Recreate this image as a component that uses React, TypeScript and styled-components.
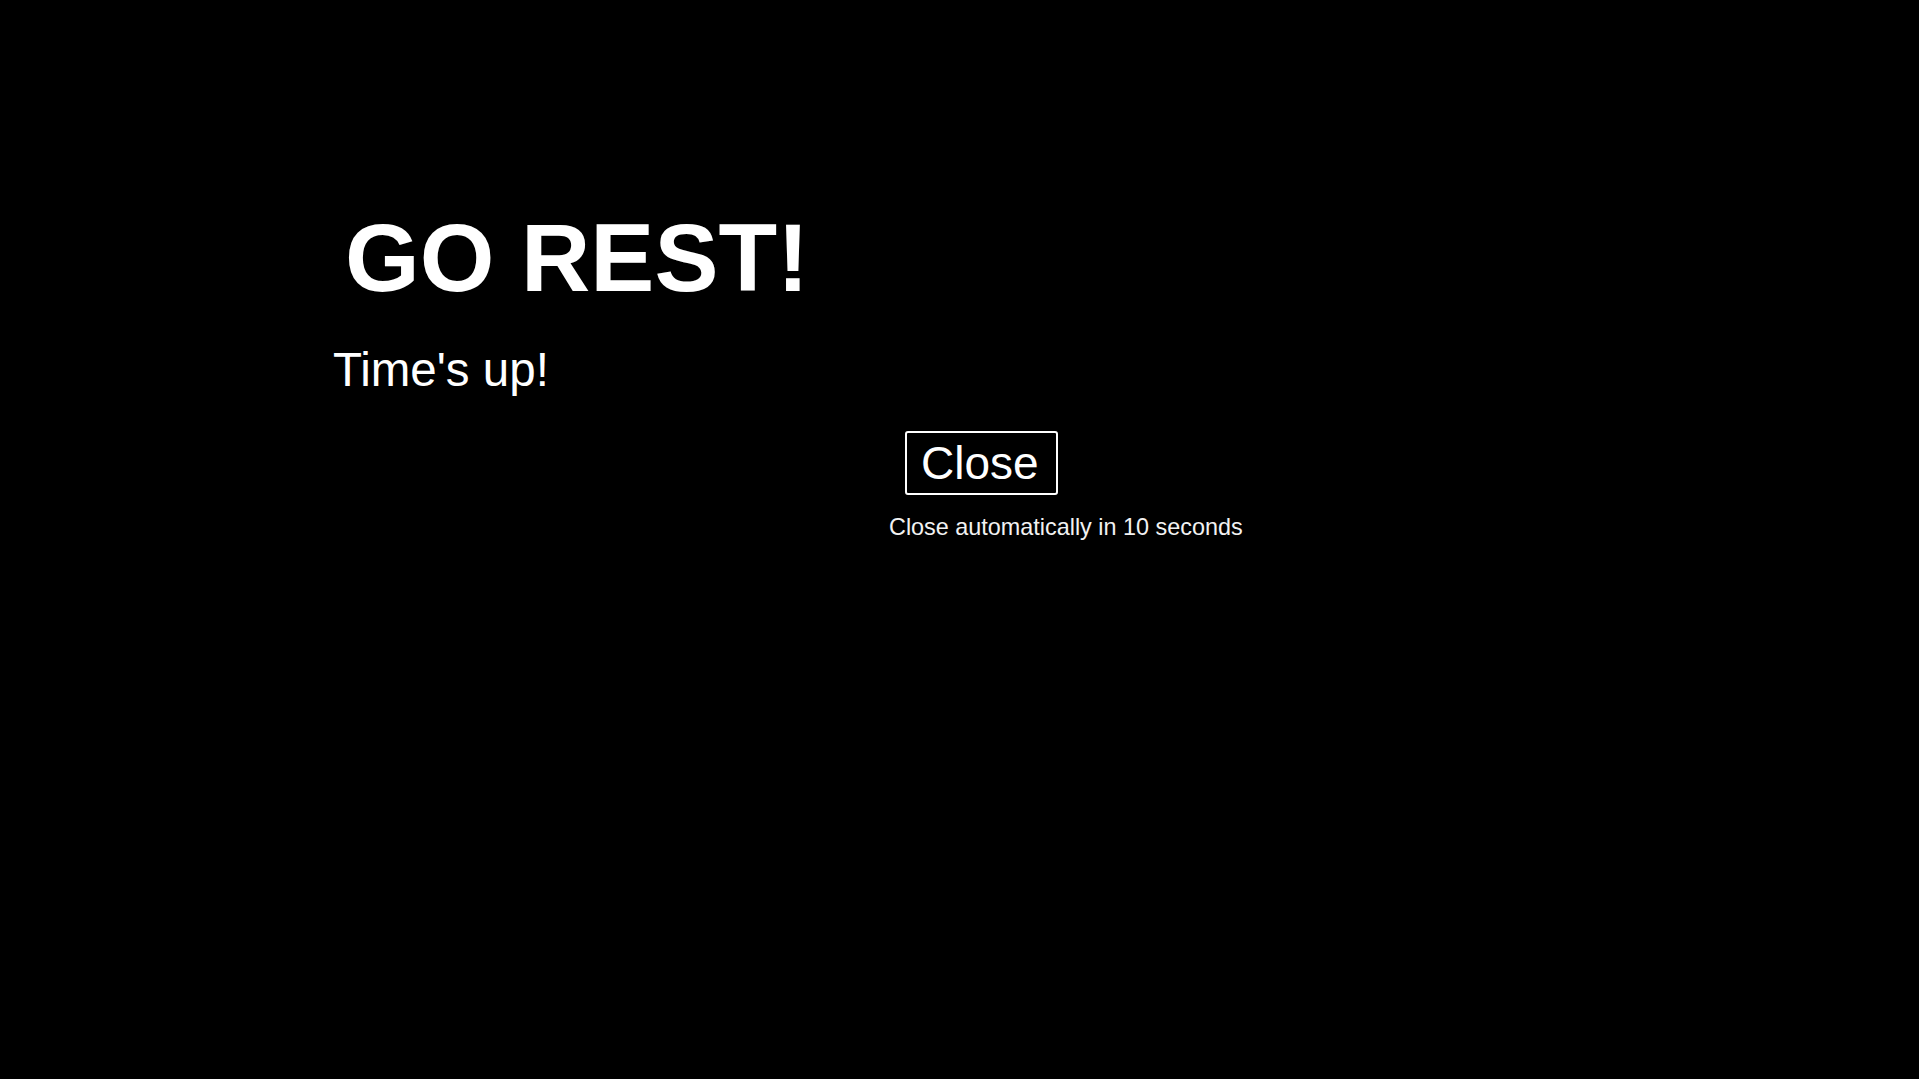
import React from 'react'
import styled, { createGlobalStyle } from 'styled-components'

const GlobalStyles = createGlobalStyle`
  html,
  body {
    margin: 0;
    padding: 0;
    background: #000;
  }
  body {
    font-family: 'Liberation Sans', Arial, sans-serif;
    color: #fff;
    min-height: 100vh;
  }
`

const Page = styled.main`
  display: flex;
  flex-direction: column;
  align-items: flex-start;
  box-sizing: border-box;
  min-height: 100vh;
  padding-top: 210px;
  background: #000;
`

const Title = styled.h1`
  margin: 0 0 0 345px;
  font-size: 96px;
  font-weight: 700;
  line-height: 1;
  color: #fff;
`

const Subtitle = styled.p`
  margin: 40px 0 0 333px;
  font-size: 47.5px;
  line-height: 1;
  color: #fff;
`

const Actions = styled.div`
  display: flex;
  flex-direction: column;
  align-items: flex-start;
  margin: 37px 0 0 889px;
`

const CloseButton = styled.button`
  margin-left: 16px;
  padding: 7px 17px 7px 14px;
  border: 2px solid #fff;
  border-radius: 3px;
  background: #000;
  color: #fff;
  font-family: inherit;
  font-size: 46px;
  line-height: 1;
  cursor: pointer;
`

const Countdown = styled.p`
  margin: 21px 0 0;
  font-size: 23.4px;
  line-height: 1;
  color: #f2f2f2;
`

const App: React.FC = () => {
  const seconds = 10

  return (
    <Page>
      <GlobalStyles />
      <Title>GO REST!</Title>
      <Subtitle>Time's up!</Subtitle>
      <Actions>
        <CloseButton type="button">Close</CloseButton>
        <Countdown>Close automatically in {seconds} seconds</Countdown>
      </Actions>
    </Page>
  )
}

export default App
